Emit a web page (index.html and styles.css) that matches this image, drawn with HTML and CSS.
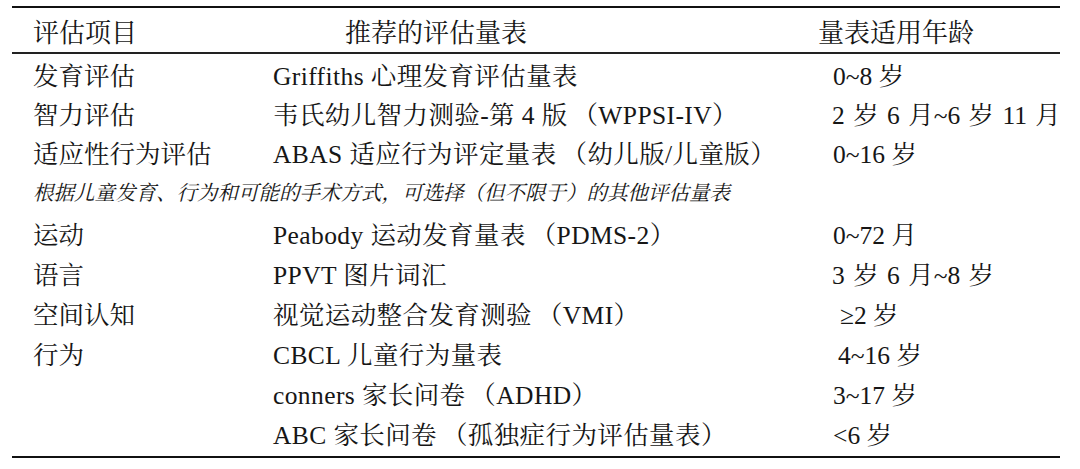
FILE: index.html
```html
<!DOCTYPE html>
<html>
<head>
<meta charset="utf-8">
<title>评估量表</title>
<link rel="stylesheet" href="styles.css">
</head>
<body>
<div class="table">
  <div class="row head">
    <div class="c1">评估项目</div>
    <div class="c2 h2">推荐的评估量表</div>
    <div class="c3 h3">量表适用年龄</div>
  </div>
  <div class="body">
    <div class="row r39">
      <div class="c1">发育评估</div>
      <div class="c2">Griffiths 心理发育评估量表</div>
      <div class="c3">0~8 岁</div>
    </div>
    <div class="row r39">
      <div class="c1">智力评估</div>
      <div class="c2">韦氏幼儿智力测验-第 4 版<span class="lp">（</span>WPPSI-IV）</div>
      <div class="c3 n1">2 岁 6 月~6 岁 11 月</div>
    </div>
    <div class="row r39">
      <div class="c1">适应性行为评估</div>
      <div class="c2">ABAS 适应行为评定量表<span class="lp">（</span>幼儿版/儿童版）</div>
      <div class="c3">0~16 岁</div>
    </div>
    <div class="row note">
      <div class="span">根据儿童发育、行为和可能的手术方式，可选择（但不限于）的其他评估量表</div>
    </div>
    <div class="row">
      <div class="c1">运动</div>
      <div class="c2">Peabody 运动发育量表<span class="lp">（</span>PDMS-2）</div>
      <div class="c3">0~72 月</div>
    </div>
    <div class="row">
      <div class="c1">语言</div>
      <div class="c2">PPVT 图片词汇</div>
      <div class="c3 n1">3 岁 6 月~8 岁</div>
    </div>
    <div class="row">
      <div class="c1">空间认知</div>
      <div class="c2">视觉运动整合发育测验<span class="lp">（</span>VMI）</div>
      <div class="c3 ind">≥2 岁</div>
    </div>
    <div class="row">
      <div class="c1">行为</div>
      <div class="c2">CBCL 儿童行为量表</div>
      <div class="c3 ind2">4~16 岁</div>
    </div>
    <div class="row">
      <div class="c1"></div>
      <div class="c2">conners 家长问卷<span class="lp">（</span>ADHD）</div>
      <div class="c3">3~17 岁</div>
    </div>
    <div class="row">
      <div class="c1"></div>
      <div class="c2">ABC 家长问卷<span class="lp">（</span>孤独症行为评估量表）</div>
      <div class="c3">&lt;6 岁</div>
    </div>
  </div>
</div>
</body>
</html>
```

FILE: styles.css
```css
html, body {
  margin: 0;
  padding: 0;
  background: #ffffff;
}

body {
  color: #161616;
  font-family: "Liberation Serif", "Times New Roman", "Noto Serif CJK SC", "Noto Sans CJK SC", serif;
  font-size: 25.5px;
}

.table {
  margin: 6px 0 0 12px;
  width: 1048px;
  border-top: 2px solid #111;
  border-bottom: 2px solid #111;
}

.body {
  padding-bottom: 3px;
}

.row {
  display: grid;
  grid-template-columns: 240px 560px 1fr;
  align-items: center;
  height: 40px;
  padding-left: 21px;
  white-space: nowrap;
}

.head {
  height: 44px;
  border-bottom: 2px solid #222;
  font-size: 26px;
}

.h2 {
  padding-left: 72px;
}

.h3 {
  margin-left: -15px;
}

.r39 {
  height: 39px;
}

.c2 {
  letter-spacing: 0.4px;
}

.head .c2 {
  letter-spacing: 0;
}

.note {
  display: flex;
  height: 42px;
  align-items: center;
}

.span {
  font-size: 20.5px;
  font-style: italic;
  padding-bottom: 2px;
}

.lp {
  display: inline-block;
  width: 1.05em;
  text-align: right;
  margin-left: 4px;
}

.n1 {
  margin-left: -1px;
  word-spacing: 2px;
}

.ind {
  padding-left: 7px;
}

.ind2 {
  padding-left: 5px;
}
```
